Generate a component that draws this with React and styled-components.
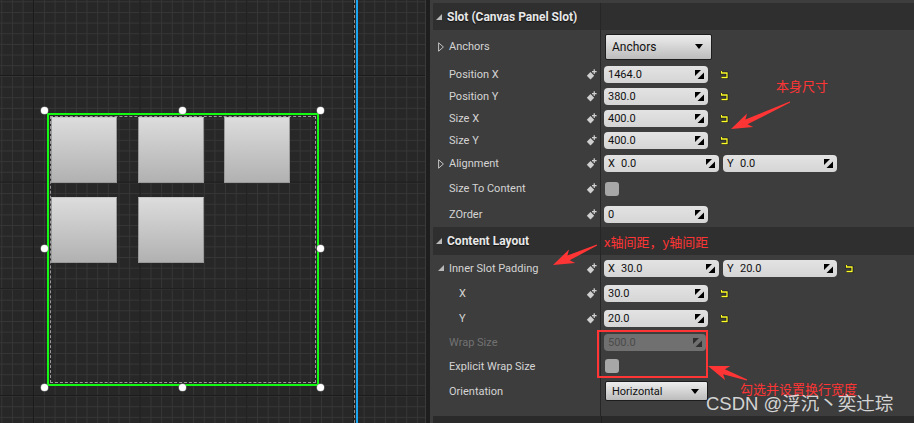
import React from "react";
import styled, { createGlobalStyle } from "styled-components";

const GlobalStyle = createGlobalStyle`
  html, body {
    margin: 0;
    padding: 0;
    background: #262626;
  }
  body {
    width: 914px;
    height: 423px;
    overflow: hidden;
    font-family: Roboto, "Noto Sans", sans-serif;
  }
`;

const tiles = [1, 2, 3, 4, 5];

const handles = [
  [0, 0], [0.5, 0], [1, 0],
  [0, 0.5], [1, 0.5],
  [0, 1], [0.5, 1], [1, 1]
];

// red annotation arrow: thin tail, swept head
const arrowPoints = (tx, ty, hx, hy) => {
  const dx = hx - tx;
  const dy = hy - ty;
  const len = Math.hypot(dx, dy);
  const ux = dx / len;
  const uy = dy / len;
  const nx = -uy;
  const ny = ux;
  const bx = hx - ux * 17;
  const by = hy - uy * 17;
  const wx = hx - ux * 21;
  const wy = hy - uy * 21;
  const pts = [
    [tx + nx * 0.6, ty + ny * 0.6],
    [bx + nx * 2.6, by + ny * 2.6],
    [wx + nx * 7.5, wy + ny * 7.5],
    [hx, hy],
    [wx - nx * 7.5, wy - ny * 7.5],
    [bx - nx * 2.6, by - ny * 2.6],
    [tx - nx * 0.6, ty - ny * 0.6]
  ];
  return pts.map((p) => p.map((v) => v.toFixed(1)).join(",")).join(" ");
};

const SpinIcon = ({ dim }) => (
  <SpinSvg viewBox="0 0 9 9">
    <polygon points="0,0 6,0 0,6" fill={dim ? "#2e2e2e" : "#000"} />
    <polygon points="9,2.5 9,9 2.5,9" fill={dim ? "#2e2e2e" : "#000"} />
  </SpinSvg>
);

const BindIcon = () => (
  <BindSvg viewBox="0 0 11 11">
    <polygon points="4.5,3 8.2,6.7 4.5,10.4 0.8,6.7" fill="#cfcfcf" />
    <rect x="7.6" y="0.3" width="1.3" height="4.6" fill="#cfcfcf" />
    <rect x="6" y="2" width="4.6" height="1.3" fill="#cfcfcf" />
  </BindSvg>
);

const ResetIcon = ({ gap }) => (
  <ResetSvg $gap={gap} viewBox="0 0 9 9">
    <path d="M1.5 1 V3 H7 V7.5 H1.5" fill="none" stroke="#111" strokeWidth="2.6" />
    <path d="M1.5 1 V3 H7 V7.5 H1.5" fill="none" stroke="#ffff2a" strokeWidth="1.3" />
  </ResetSvg>
);

const Expander = ({ open }) => (
  <ExpanderSlot>
    {open ? (
      <svg width="6" height="6" viewBox="0 0 6 6">
        <polygon points="6,0 6,6 0,6" fill="#b9b9b9" />
      </svg>
    ) : (
      <svg width="6" height="10" viewBox="0 0 6 10">
        <polygon points="0.6,0.8 5.4,5 0.6,9.2" fill="none" stroke="#c4c4c4" strokeWidth="1" />
      </svg>
    )}
  </ExpanderSlot>
);

const NumField = ({ w, axis, value, dim }) => (
  <Field $w={w} $dim={dim}>
    {axis && <AxisTag>{axis}</AxisTag>}
    <FieldText>{value}</FieldText>
    <SpinIcon dim={dim} />
  </Field>
);

const Property = ({ h, label, expander, indent, dim, bind = true, children }) => (
  <Row $h={h}>
    <NameCell $indent={indent}>
      {expander ? <Expander open={expander === "open"} /> : <ExpanderSlot />}
      <Label $dim={dim}>{label}</Label>
      {bind && <BindIcon />}
    </NameCell>
    <ValueCell>{children}</ValueCell>
  </Row>
);

const App = () => {
  return (
    <>
      <GlobalStyle />
      <Screen>
        <Canvas>
          <DashGuide />
          <BlueGuide />
          <HandleFrame>
            {handles.map(([hx, hy], i) => (
              <Handle key={i} $x={hx} $y={hy} />
            ))}
          </HandleFrame>
          <Selection>
            <WrapBox>
              {tiles.map((t) => (
                <Tile key={t} />
              ))}
            </WrapBox>
          </Selection>
        </Canvas>

        <Gutter />

        <Panel>
          <SectionHeader $h={27}>
            <HeaderName>
              <Expander open />
              <HeaderTitle>Slot (Canvas Panel Slot)</HeaderTitle>
            </HeaderName>
          </SectionHeader>

          <Property h={33} label="Anchors" expander="closed" bind={false}>
            <Dropdown $w={107} $h={26} $fs={12}>
              Anchors
              <DropArrow />
            </Dropdown>
          </Property>
          <Property h={22} label="Position X">
            <NumField w={104} value="1464.0" />
            <ResetIcon gap={8} />
          </Property>
          <Property h={22} label="Position Y">
            <NumField w={104} value="380.0" />
            <ResetIcon gap={8} />
          </Property>
          <Property h={22} label="Size X">
            <NumField w={104} value="400.0" />
            <ResetIcon gap={8} />
          </Property>
          <Property h={22} label="Size Y">
            <NumField w={104} value="400.0" />
            <ResetIcon gap={8} />
          </Property>
          <Property h={25} label="Alignment" expander="closed">
            <NumField w={115} axis="X" value="0.0" />
            <NumField w={114} axis="Y" value="0.0" />
          </Property>
          <Property h={25} label="Size To Content">
            <Checkbox />
          </Property>
          <Property h={26} label="ZOrder">
            <NumField w={104} value="0" />
          </Property>

          <SectionHeader $h={28}>
            <HeaderName>
              <Expander open />
              <HeaderTitle>Content Layout</HeaderTitle>
            </HeaderName>
          </SectionHeader>

          <Property h={26} label="Inner Slot Padding" expander="open">
            <NumField w={115} axis="X" value="30.0" />
            <NumField w={114} axis="Y" value="20.0" />
            <ResetIcon gap={4} />
          </Property>
          <Property h={25} label="X" indent>
            <NumField w={104} value="30.0" />
            <ResetIcon gap={8} />
          </Property>
          <Property h={24} label="Y" indent>
            <NumField w={104} value="20.0" />
            <ResetIcon gap={8} />
          </Property>
          <Property h={24} label="Wrap Size" dim bind={false}>
            <NumField w={102} value="500.0" dim />
          </Property>
          <Property h={24} label="Explicit Wrap Size" bind={false}>
            <Checkbox />
          </Property>
          <Property h={26} label="Orientation" bind={false}>
            <Dropdown $w={103} $h={20} $fs={11}>
              Horizontal
              <DropArrow />
            </Dropdown>
          </Property>
          <Row $grow>
            <NameCell />
            <ValueCell />
          </Row>
          <PanelFooter>
            <FooterName />
          </PanelFooter>
        </Panel>

        <Overlay viewBox="0 0 914 423">
          <polygon points={arrowPoints(790, 102, 731, 129)} fill="#ff3535" />
          <polygon points={arrowPoints(597, 245, 553, 265)} fill="#ff3535" />
          <polygon points={arrowPoints(747, 380, 708, 366)} fill="#ff3535" />
          <rect x="598" y="331" width="109" height="46" fill="none" stroke="#ff3535" strokeWidth="2" />
        </Overlay>
        <Note $x={776} $y={78}>本身尺寸</Note>
        <Note $x={604} $y={234}>x轴间距，y轴间距</Note>
        <Note $x={740} $y={381}>勾选并设置换行宽度</Note>
        <Watermark>CSDN @浮沉丶奕辻琮</Watermark>
      </Screen>
    </>
  );
};

const Screen = styled.div`
  position: relative;
  display: flex;
  width: 914px;
  height: 423px;
  overflow: hidden;
`;

const Canvas = styled.div`
  position: relative;
  flex: none;
  width: 425px;
  height: 100%;
  background-color: #272727;
  background-image:
    linear-gradient(to right, #1b1b1b 1px, transparent 1px),
    linear-gradient(to bottom, #1b1b1b 1px, transparent 1px),
    linear-gradient(to right, #363636 1px, transparent 1px),
    linear-gradient(to bottom, #363636 1px, transparent 1px);
  background-size:
    106.67px 106.67px,
    106.67px 106.67px,
    10.667px 10.667px,
    10.667px 10.667px;
  background-position:
    33px 75px,
    33px 75px,
    1.3px 1.3px,
    1.3px 1.3px;
`;

const DashGuide = styled.div`
  position: absolute;
  left: 354px;
  top: 0;
  bottom: 0;
  border-left: 1px dashed #8c8c8c;
`;

const BlueGuide = styled.div`
  position: absolute;
  left: 356px;
  top: 0;
  bottom: 0;
  width: 2px;
  background: #1aa6f2;
`;

const HandleFrame = styled.div`
  position: absolute;
  left: 44px;
  top: 110px;
  width: 276px;
  height: 277px;
  z-index: 2;
`;

const Handle = styled.span`
  position: absolute;
  left: ${(p) => p.$x * 100}%;
  top: ${(p) => p.$y * 100}%;
  width: 7px;
  height: 7px;
  margin: -3.5px 0 0 -3.5px;
  border-radius: 50%;
  background: #ffffff;
  box-shadow: 0 0 0 0.5px #888;
`;

const Selection = styled.div`
  position: absolute;
  left: 47px;
  top: 113px;
  width: 272px;
  height: 273px;
  box-sizing: border-box;
  border: 2px solid #14f814;
  padding: 1px;
`;

const WrapBox = styled.div`
  display: flex;
  flex-wrap: wrap;
  align-content: flex-start;
  gap: 14px 20.7px;
  height: 100%;
  box-sizing: border-box;
  border: 1px dashed #9a9a9a;
`;

const Tile = styled.div`
  width: 66px;
  height: 66px;
  box-sizing: border-box;
  border: 1px solid #9a9a9a;
  border-top-color: #c8c8c8;
  background: linear-gradient(#dcdcdc, #b1b1b1);
`;

const Gutter = styled.div`
  flex: none;
  width: 4px;
  background: #1e1e1e;
  border-left: 1px solid #3a3a3a;
`;

const Panel = styled.div`
  display: flex;
  flex-direction: column;
  flex: 1;
  padding-top: 3px;
  background: #3d3d3d;
`;

const SectionHeader = styled.div`
  display: flex;
  height: ${(p) => p.$h}px;
  margin-left: 3px;
  background: #2f2f2f;
  flex: none;
`;

const HeaderName = styled.div`
  display: flex;
  align-items: center;
  width: 168px;
  padding-left: 3px;
  box-sizing: border-box;
  border-right: 1px solid #262626;
`;

const HeaderTitle = styled.span`
  color: #e8e8e8;
  font-size: 12px;
  font-weight: 700;
  text-shadow: 0 1px 1px #111;
  white-space: nowrap;
`;

const Row = styled.div`
  display: flex;
  height: ${(p) => (p.$grow ? "auto" : `${p.$h}px`)};
  flex: ${(p) => (p.$grow ? 1 : "none")};
`;

const NameCell = styled.div`
  display: flex;
  align-items: center;
  width: 171px;
  flex: none;
  box-sizing: border-box;
  padding-left: ${(p) => (p.$indent ? 18 : 8)}px;
  border-right: 1px solid #262626;
`;

const ExpanderSlot = styled.span`
  display: flex;
  align-items: center;
  width: 11px;
  flex: none;
`;

const Label = styled.span`
  color: ${(p) => (p.$dim ? "#727272" : "#d4d4d4")};
  font-size: 11px;
  white-space: nowrap;
`;

const BindSvg = styled.svg`
  width: 11px;
  height: 11px;
  margin-left: auto;
  margin-right: 3px;
`;

const ValueCell = styled.div`
  display: flex;
  align-items: center;
  gap: 4px;
  flex: 1;
  padding-left: 3px;
`;

const Field = styled.div`
  display: flex;
  align-items: center;
  width: ${(p) => p.$w}px;
  height: 17px;
  box-sizing: border-box;
  padding: 0 4px 0 4px;
  border-radius: 4px;
  background: ${(p) => (p.$dim ? "#707070" : "linear-gradient(#e3e3e3, #d5d5d5)")};
  color: ${(p) => (p.$dim ? "#4b4b4b" : "#111111")};
  font-size: 11px;
`;

const AxisTag = styled.span`
  width: 13px;
`;

const FieldText = styled.span`
  flex: 1;
`;

const SpinSvg = styled.svg`
  width: 9px;
  height: 9px;
`;

const ResetSvg = styled.svg`
  width: 9px;
  height: 9px;
  margin-left: ${(p) => p.$gap}px;
`;

const Dropdown = styled.div`
  display: flex;
  align-items: center;
  justify-content: space-between;
  width: ${(p) => p.$w}px;
  height: ${(p) => p.$h}px;
  margin-left: 1px;
  box-sizing: border-box;
  padding: 0 8px 0 6px;
  border: 1px solid #1d1d1d;
  border-radius: 2px;
  background: linear-gradient(#ededed, #bcbcbc);
  color: #111111;
  font-size: ${(p) => p.$fs}px;
`;

const DropArrow = styled.span`
  width: 0;
  height: 0;
  border-left: 4.5px solid transparent;
  border-right: 4.5px solid transparent;
  border-top: 5px solid #000;
`;

const Checkbox = styled.span`
  width: 14px;
  height: 14px;
  margin-left: 1px;
  border-radius: 3px;
  background: #a7a7a7;
`;

const PanelFooter = styled.div`
  display: flex;
  height: 7px;
  margin-left: 3px;
  background: #2a2a2a;
`;

const FooterName = styled.div`
  width: 168px;
  border-right: 1px solid #202020;
`;

const Overlay = styled.svg`
  position: absolute;
  left: 0;
  top: 0;
  width: 914px;
  height: 423px;
  pointer-events: none;
`;

const Note = styled.span`
  position: absolute;
  left: ${(p) => p.$x}px;
  top: ${(p) => p.$y}px;
  color: #ff3535;
  font-size: 13px;
  line-height: 16px;
  font-family: "Noto Sans CJK SC", sans-serif;
  white-space: nowrap;
`;

const Watermark = styled.span`
  position: absolute;
  left: 706px;
  top: 393px;
  color: rgba(255, 255, 255, 0.78);
  font-size: 18.5px;
  line-height: 22px;
  font-family: "Liberation Sans", "Noto Sans CJK SC", sans-serif;
  white-space: nowrap;
`;

export default App;
